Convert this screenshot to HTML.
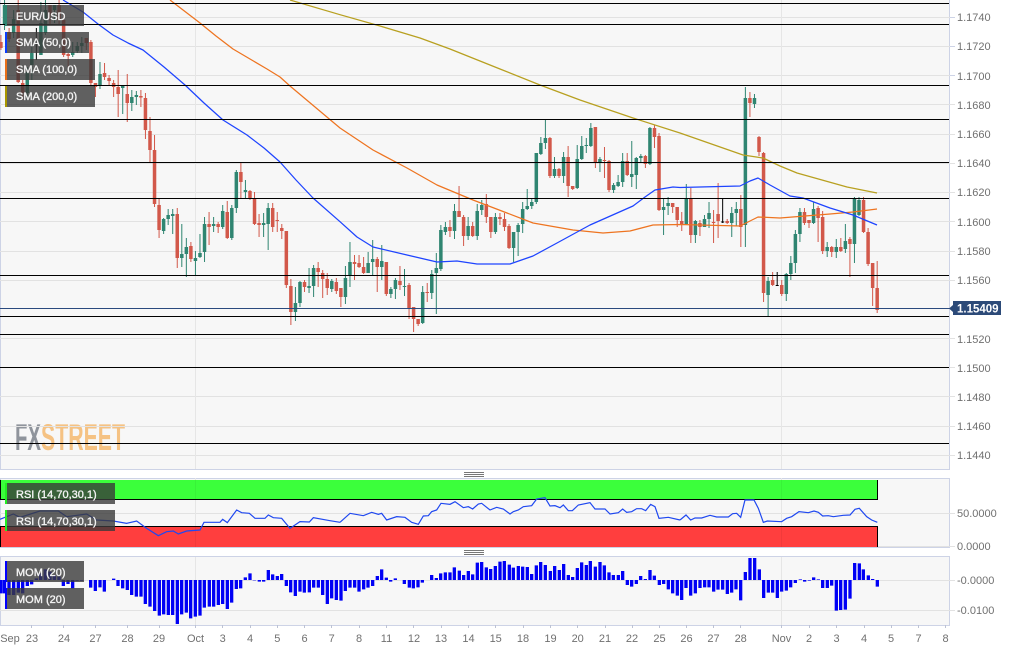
<!DOCTYPE html>
<html><head><meta charset="utf-8"><style>
html,body{margin:0;padding:0;background:#fff}
svg{display:block}
text{font-family:"Liberation Sans",Arial,sans-serif}
.ns{vector-effect:non-scaling-stroke;fill:none}
.ax{font-size:11px;fill:#707070}
.lb{font-size:11px;fill:#f4f4f4;stroke:#f4f4f4;stroke-width:.35px}
</style></head><body>
<svg width="1020" height="651" viewBox="0 0 1020 651" xmlns="http://www.w3.org/2000/svg">
<rect width="1020" height="651" fill="#fff"/>
<!-- panes -->
<rect x="0" y="0" width="949" height="469" fill="#f7f7f7"/>
<rect x="0" y="478" width="949" height="69" fill="#f7f7f7"/>
<rect x="0" y="557" width="949" height="68" fill="#f7f7f7"/>
<path d="M.5 0V469.5H949.5V0M.5 478.5H949.5V547.5H.5ZM.5 556.5H949.5V625.5H.5Z" fill="none" stroke="#cdd3e6" stroke-width="1"/>
<!-- watermark -->
<text x="15" y="450" font-size="37" font-weight="bold" fill="#8f949c" textLength="26" lengthAdjust="spacingAndGlyphs">FX</text>
<text x="41" y="450" font-size="37" font-weight="bold" fill="#f5c283" textLength="84" lengthAdjust="spacingAndGlyphs">STREET</text>
<!-- grid -->
<path d="M0 17.5H955M0 46.5H955M0 75.5H955M0 104.5H955M0 134.5H955M0 163.5H955M0 192.5H955M0 221.5H955M0 251.5H955M0 280.5H955M0 338.5H955M0 367.5H955M0 396.5H955M0 426.5H955M0 455.5H955M0 513.5H955M0 546.5H955M0 580.5H955M0 610.5H955" stroke="#e2e2e2" stroke-width="1" fill="none"/>
<path d="M195.5 0V469M781.5 0V469M195.5 478V547M781.5 478V547M195.5 557V625M781.5 557V625" stroke="#e6e6e6" stroke-width="1" fill="none"/>
<!-- candles -->
<g transform="scale(4.545,1)">
<path class="ns" stroke="#d2584a" stroke-width="1" d="M0.2 35V50M2 28V42M4 0V83M5 80V100M11 13V25M13 0V25M14 15V57M15 53V67M19 38V50M20 40V85M21 83V97M23 63V80M24 75V85M25 80V97M26 70V117M28 74V122M31 90V107M32 93V139M33 117V163M34 135V207M35 199V238M39 208V268M42 242V262M46 212V245M48 222V233M50 201V239M53 163V199M55 190V200M56 192V225M57 214V237M60 203V232M61 212V232M62 224V239M63 231V288M64 279V325M67 280V292M70 262V287M71 270V298M72 273V295M74 278V294M75 288V307M78 255V280M79 255V268M80 257V274M83 257V292M85 262V296M88 266V290M90 283V319M91 307V332M92 319V326M94 283V302M99 220V237M101 186V217M102 215V246M104 222V237M107 194V223M108 217V238M110 213V225M111 213V231M112 224V249M121 137V178M123 168V178M125 146V197M126 186V190M131 127V168M133 147V178M134 160V192M138 153V176M142 155V168M144 125V148M145 133V211M148 203V213M149 207V227M150 212V231M152 188V243M154 220V236M157 210V243M158 183V238M160 219V224M163 195V247M165 92V117M167 136V156M168 152V302M170 272V286M172 280V296M177 208V225M178 220V228M180 206V242M181 211V254M183 246V257M185 238V252M187 237V277M190 197V233M191 228V266M192 263V306M193 261V313"/>
<path class="ns" stroke="#d2584a" stroke-width="3.5" d="M0.2 42V48M2 32V39M4 10V82M5 83V93M11 5V14M13 5V20M14 20V55M15 54V56M19 38V43M20 42V83M21 83V87M23 73V77M24 78V81M25 83V87M26 87V94M28 94V103M31 96V97.5M32 98V130M33 131V150M34 150V204M35 205V230M39 214V258M42 246V259M46 224V227M48 224V227M50 212V238M53 172V182M55 191V198M56 198V224M57 223V225M60 208V227M61 220V221M62 228V231M63 231V285M64 286V312M67 282V287M70 268V272M71 273V279M72 279V288M74 282V291M75 288V297M78 262V264M79 263V267M80 267V273M83 259V267M85 262V294M88 281V285M90 285V308M91 307V319M92 319V324M94 292V293M99 227V231M101 211V217M102 217V236M104 226V236M107 204V217M108 217V232M110 217V219M111 219V227M112 226V248M121 138V176M123 169V176M125 157V186M126 186V189M131 127V162M133 160V161M134 161V190M138 161V175M142 156V164M144 128V137M145 136V210M148 203V207M149 207V220M150 221V224M152 199V235M154 223V227M157 222V223M158 214V221M160 221V223M163 209V227M165 98V103M167 137V152M168 153V293M170 280V285M172 285V294M177 212V223M178 220V223M180 208V218M181 217V251M183 247V252M185 247V251M187 239V244M190 200V232M191 232V264M192 263V288M193 288V310"/>
<path class="ns" stroke="#2f8571" stroke-width="1" d="M1 0V30M3 10V38M6 67V100M7 47V80M9 2V55M10 0V35M12 7V23M16 42V57M17 42V53M18 37V53M22 62V89M27 86V114M29 90V111M30 91V105M36 218V234M37 209V225M38 209V234M40 224V267M41 238V277M43 251V276M44 234V258M45 217V262M47 217V232M49 205V229M51 205V240M52 170V213M54 180V198M58 213V237M59 203V250M65 287V321M66 281V307M68 268V293M69 265V297M73 279V292M76 266V304M77 242V287M81 252V273M82 240V275M84 245V280M86 287V298M87 278V299M89 269V296M93 286V324M95 270V299M96 253V314M97 225V271M98 222V235M100 204V239M103 217V240M105 204V240M106 200V215M109 213V234M113 232V262M114 223V256M115 202V233M116 189V210M117 198V209M118 153V204M119 137V155M120 120V149M122 157V178M124 152V183M127 145V189M128 136V160M129 138V153M130 123V147M132 157V172M135 183V193M136 175V187M137 153V187M139 141V187M140 157V189M141 154V162M143 127V165M146 199V235M147 197V215M151 184V225M153 220V243M155 215V227M156 202V228M161 207V237M162 202V226M164 87V247M166 94V108M169 277V316M173 273V301M174 256V280M175 230V273M176 208V242M179 202V224M182 242V257M184 239V258M186 224V253M188 197V263M189 197V216"/>
<path class="ns" stroke="#2f8571" stroke-width="3.5" d="M1 5V25M3 19V33M6 72V93M7 53V65M9 23V55M10 10V33M12 5V10M16 52V55M17 46V51M18 43V46M22 74V86M27 86V88M29 97V103M30 95V97M36 219V231M37 215V219M38 214V216M40 254V258M41 247V254M43 258V261M44 253V257M45 224V252M47 224V226M49 211V227M51 208V238M52 172V208M54 190V192M58 223V225M59 208V224M65 303V312M66 282V303M68 286V288M69 268V286M73 281V289M76 278V297M77 262V276M81 263V273M82 259V262M84 261V267M86 289V294M87 280V289M89 286V287M93 292V323M95 274V293M96 268V273M97 230V269M98 227V232M100 211V231M103 226V236M105 211V236M106 205V210M109 217V232M113 232V248M114 225V232M115 209V224M116 206V209M117 202V206M118 153V202M119 143V154M120 138V143M122 169V176M124 157V176M127 159V188M128 146V159M129 145V146M130 128V146M132 159V162M135 185V190M136 182V186M137 161V182M139 174V177M140 158V175M141 156V158M143 128V164M146 207V210M147 203V206M151 199V224M153 221V235M155 219V227M156 213V219M161 213V223M162 209V213M164 98V225M166 98V104M169 281V295M173 274V294M174 263V274M175 234V263M176 212V234M179 209V223M182 247V251M184 247V252M186 241V249M188 198V244M189 200V215"/>
<path class="ns" stroke="#000" stroke-width="1" d="M8 28V60M159 198V223M171 272V286"/>
<path class="ns" stroke="#000" stroke-width="3" d="M159 221.5V222.5M171 285V286"/>
</g>
<!-- moving averages -->
<polyline fill="none" stroke="#b8a020" stroke-width="1.25" stroke-linejoin="round" points="290,0 340,14.7 380,26 420,38 450,49 500,69 540,85 580,100 633,118 680,133 743,155 763,158 780,166 797,173 847,187 877,193"/>
<polyline fill="none" stroke="#ee7420" stroke-width="1.25" stroke-linejoin="round" points="170,0 200,23 216,36 233,49 267,69 280,77 290,86 315,107 340,128 373,150 407,168 437,185 473,200 507,213 533,223 573,230 603,233 630,231 653,225 680,224.5 740,226 750,221 758,217 780,218 830,214 853,212 877,209"/>
<polyline fill="none" stroke="#1e44ff" stroke-width="1.25" stroke-linejoin="round" points="63,0 83,12 98,24 113,35 128,43 143,50 164,67 185,85 204,103 223,120 247,135 264,148 280,162 296,180 313,198 340,221.7 357,237 373,247 407,255 437,262 457,261 477,264 510,264 533,256 557,243 590,225 633,206 645,197 655,190 673,187 680,187.5 740,186 750,181 758,178 770,185 790,196 803,198 830,208 853,215 877,225"/>
<!-- level lines -->
<path d="M0 3.5H949M0 24.5H949M0 85.5H949M0 119.5H949M0 162.5H949M0 198.5H949M0 275.5H949M0 316.5H949M0 334.5H949M0 367.5H949M0 443.5H949" stroke="#000" stroke-width="1" fill="none"/>
<path d="M0 308.5H950" stroke="#2a4a7e" stroke-width="1" fill="none"/>
<!-- RSI bands -->
<rect x="0" y="480" width="877.5" height="19.5" fill="#3bff3b"/>
<rect x="0" y="526" width="877.5" height="21" fill="#ff3e3e"/>
<path d="M.5 480V499.5H877.5V480M.5 547V526.5H877.5V547" fill="none" stroke="#000" stroke-width="1"/>
<path d="M195.5 480V499M781.5 480V499M195.5 527V547M781.5 527V547" stroke="#000" stroke-opacity=".05" fill="none"/>
<!-- RSI line -->
<g fill="none" stroke="#1f48f0" stroke-width="1.2">
<polyline class="ns" transform="translate(0,460) scale(.33333)" points="0,178 40,162 60,172 120,153 175,153 200,170 260,162 290,180 340,183 380,190 410,183 440,205 475,227 500,215 520,213 535,222 560,213 600,210 612,187 660,187 668,178 682,188 710,150 725,158 748,160 765,175 795,175 805,165 820,173 845,175 870,205 900,185 928,186 940,173 990,182 1020,187"/>
<polyline class="ns" transform="translate(340,460) scale(.33333)" points="0,187 30,160 70,167 95,157 115,163 125,160 140,180 170,170 195,172 215,187 235,193 250,168 265,167 275,155 290,150 303,130 330,133 345,125 370,143 385,140 398,147 415,132 425,130 450,150 470,142 490,147 510,162 520,155 535,150 550,140 575,137 590,117 615,113 630,138 645,137 660,143 670,135 685,152 697,152 715,135 750,128 765,147 795,147 810,162 835,158 848,147 860,157 875,155 890,146 905,146 917,152 932,133 945,140 957,175 985,172 1020,180"/>
<polyline class="ns" transform="translate(680,460) scale(.33333)" points="0,180 18,165 32,180 45,174 65,174 90,166 110,171 145,171 158,161 170,160 182,172 195,120 222,120 235,145 250,187 262,183 305,185 320,175 335,170 357,155 385,158 402,153 415,157 428,168 445,167 460,170 490,166 510,165 525,148 538,145 560,170 575,180 592,187"/>
</g>
<!-- MOM bars -->
<g fill="none" stroke="#0000f5" stroke-width="3.3">
<path class="ns" transform="translate(0,460) scale(.33333)" d="M3 360V400M13.6 360V400M27 360V405M41 360V405M55 360V398M68 360V400M82 360V378M95 360V373M109 360V355M122 360V340M136 360V328M150 360V335M163 360V345M177 360V350M190 360V378M204 360V372M218 360V385M231 360V362M245 360V362M272 360V383M286 360V393M300 360V382M313 360V395M341 360V356M354 360V378M368 360V385M382 360V390M395 360V405M409 360V410M423 360V410M436 360V432M450 360V440M464 360V453M478 360V467M491 360V463M505 360V465M518 360V465M532 360V492M545 360V463M559 360V458M572 360V475M586 360V470M600 360V467M613 360V443M628 360V440M641 360V440M655 360V435M668 360V432M682 360V447M695 360V428M709 360V387M722 360V385M736 360V352M750 360V340M763 360V361M778 360V365M791 360V365M805 360V330M818 360V343M832 360V348M845 360V342M859 360V378M872 360V397M886 360V408M900 360V395M913 360V398M928 360V397M941 360V383M955 360V383M968 360V405M982 360V432M995 360V415M1009 360V420"/>
<path class="ns" transform="translate(340,460) scale(.33333)" d="M3 360V422M16 360V393M30 360V383M44 360V383M57 360V395M71 360V388M84 360V383M98 360V378M112 360V348M125 360V328M139 360V353M152 360V365M166 360V355M193 360V372M208 360V383M220 360V385M234 360V382M247 360V368M275 360V345M289 360V354M302 360V340M316 360V337M330 360V337M343 360V322M358 360V332M371 360V345M385 360V333M398 360V343M412 360V308M425 360V306M439 360V322M452 360V327M466 360V318M480 360V305M493 360V303M508 360V314M520 360V323M535 360V318M548 360V320M562 360V321M575 360V342M589 360V316M602 360V306M616 360V315M631 360V333M644 360V318M658 360V330M671 360V312M685 360V345M698 360V351M712 360V324M725 360V307M739 360V315M751 360V303M766 360V320M780 360V306M793 360V316M807 360V337M820 360V345M835 360V345M848 360V333M862 360V375M875 360V380M889 360V372M902 360V348M916 360V357M930 360V330M943 360V347M958 360V375M971 360V372M985 360V388M998 360V400M1012 360V407"/>
<path class="ns" transform="translate(680,460) scale(.33333)" d="M5 360V420M18 360V384M32 360V407M46 360V400M60 360V384M74 360V382M87 360V382M101 360V395M114 360V389M128 360V389M142 360V402M155 360V398M168 360V388M182 360V421M196 360V336M210 360V294M224 360V294M238 360V328M251 360V414M265 360V398M278 360V398M292 360V414M305 360V395M319 360V392M332 360V382M346 360V369M361 360V358M374 360V365M388 360V362M401 360V352M415 360V358M428 360V384M442 360V384M455 360V377M469 360V452M482 360V450M496 360V449M510 360V416M524 360V309M538 360V310M550 360V328M565 360V346M578 360V357M592 360V380"/>
</g>
<!-- ticks on axis -->
<path d="M950 17.5H955M950 46.5H955M950 75.5H955" stroke="#cdd3e6" stroke-width="1" fill="none"/>
<path d="M31.5 625V628M63.5 625V628M95.5 625V628M127.5 625V628M159.5 625V628M195.5 625V628M222.5 625V628M250.5 625V628M277.5 625V628M304.5 625V628M331.5 625V628M359.5 625V628M386.5 625V628M413.5 625V628M441.5 625V628M468.5 625V628M495.5 625V628M523.5 625V628M550.5 625V628M577.5 625V628M605.5 625V628M632.5 625V628M659.5 625V628M686.5 625V628M713.5 625V628M740.5 625V628M781.5 625V628M809.5 625V628M836.5 625V628M864.5 625V628M891.5 625V628M918.5 625V628M945.5 625V628" stroke="#bcc2d4" stroke-width="1" fill="none"/>
<!-- y axis labels -->
<g class="ax">
<text x="957" y="21">1.1740</text>
<text x="957" y="50">1.1720</text>
<text x="957" y="80">1.1700</text>
<text x="957" y="109">1.1680</text>
<text x="957" y="138">1.1660</text>
<text x="957" y="167">1.1640</text>
<text x="957" y="196">1.1620</text>
<text x="957" y="226">1.1600</text>
<text x="957" y="255">1.1580</text>
<text x="957" y="284">1.1560</text>
<text x="957" y="343">1.1520</text>
<text x="957" y="372">1.1500</text>
<text x="957" y="401">1.1480</text>
<text x="957" y="430">1.1460</text>
<text x="957" y="459">1.1440</text>
<text x="957" y="517">50.0000</text>
<text x="957" y="550">0.0000</text>
<text x="957" y="584">-0.0000</text>
<text x="957" y="614">-0.0100</text>
</g>
<!-- x axis labels -->
<g class="ax" text-anchor="middle">
<text x="10" y="642">Sep</text><text x="32" y="642">23</text><text x="64" y="642">24</text><text x="95.5" y="642">27</text><text x="127.5" y="642">28</text><text x="159" y="642">29</text><text x="195.5" y="642">Oct</text><text x="222.7" y="642">3</text><text x="250" y="642">4</text><text x="277.3" y="642">5</text><text x="304.5" y="642">6</text><text x="331.7" y="642">7</text><text x="359" y="642">8</text><text x="386.5" y="642">11</text><text x="414" y="642">12</text><text x="441" y="642">13</text><text x="468.5" y="642">14</text><text x="495.7" y="642">15</text><text x="523" y="642">18</text><text x="550.5" y="642">19</text><text x="577.7" y="642">20</text><text x="605" y="642">21</text><text x="632" y="642">22</text><text x="659.5" y="642">25</text><text x="686.5" y="642">26</text><text x="713.5" y="642">27</text><text x="740.7" y="642">28</text><text x="781.5" y="642">Nov</text><text x="809" y="642">2</text><text x="836.5" y="642">3</text><text x="864" y="642">4</text><text x="891" y="642">5</text><text x="918.5" y="642">7</text><text x="945.5" y="642">8</text>
</g>
<!-- price tag -->
<path d="M949 308.5L953 305V301H1001V315H953V312Z" fill="#2c4a78"/>
<text x="957" y="312.5" font-size="11.5" font-weight="bold" fill="#fff">1.15409</text>
<!-- splitters -->
<path d="M464 472.5H484M464 474.5H484M464 476.5H484M464 550.5H484M464 552.5H484M464 554.5H484" stroke="#777" stroke-width="1" fill="none"/>
<!-- legend boxes -->
<g fill="#3a3a3a" fill-opacity=".8">
<rect x="5" y="5" width="79" height="21"/>
<rect x="5" y="32" width="84" height="21"/>
<rect x="5" y="59" width="90" height="21"/>
<rect x="5" y="86" width="90" height="21"/>
<rect x="5" y="483" width="110" height="21"/>
<rect x="5" y="510" width="110" height="21"/>
<rect x="5" y="561" width="79" height="21"/>
<rect x="5" y="588" width="79" height="21"/>
</g>
<rect x="5" y="5" width="2" height="21" fill="#2f8571"/>
<rect x="5" y="32" width="2" height="21" fill="#0a3cff"/>
<rect x="5" y="59" width="2" height="21" fill="#e8701a"/>
<rect x="5" y="86" width="2" height="21" fill="#a89600"/>
<rect x="5" y="483" width="2" height="21" fill="#22ee22"/>
<rect x="5" y="510" width="2" height="21" fill="#22ee22"/>
<rect x="5" y="561" width="2" height="21" fill="#0000ff"/>
<rect x="5" y="588" width="2" height="21" fill="#0000ff"/>
<g class="lb">
<text x="16" y="20">EUR/USD</text>
<text x="16" y="46">SMA (50,0)</text>
<text x="16" y="73">SMA (100,0)</text>
<text x="16" y="100">SMA (200,0)</text>
<text x="16" y="498">RSI (14,70,30,1)</text>
<text x="16" y="525">RSI (14,70,30,1)</text>
<text x="16" y="576">MOM (20)</text>
<text x="16" y="603">MOM (20)</text>
</g>
</svg>
</body></html>
